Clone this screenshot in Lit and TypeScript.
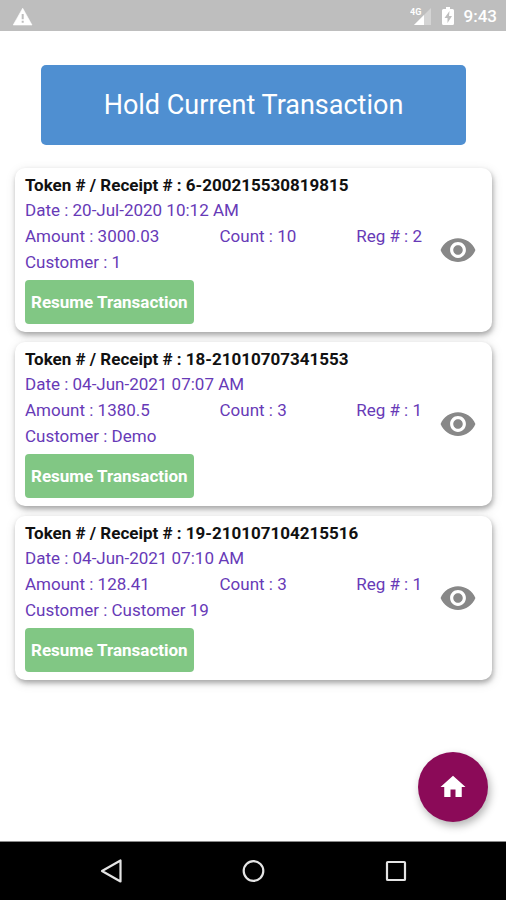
import { LitElement, html, css } from "lit";
import { customElement, property } from "lit/decorators.js";

interface HeldTransaction {
  token: string;
  date: string;
  amount: string;
  count: number;
  register: number;
  customer: string;
}

const HELD: HeldTransaction[] = [
  { token: "6-200215530819815", date: "20-Jul-2020 10:12 AM", amount: "3000.03", count: 10, register: 2, customer: "1" },
  { token: "18-21010707341553", date: "04-Jun-2021 07:07 AM", amount: "1380.5", count: 3, register: 1, customer: "Demo" },
  { token: "19-210107104215516", date: "04-Jun-2021 07:10 AM", amount: "128.41", count: 3, register: 1, customer: "Customer 19" },
];

const controls = css`
  button {
    margin: 0;
    padding: 0;
    border: 0;
    background: none;
    font-family: inherit;
    cursor: pointer;
  }
  svg {
    display: block;
  }
`;

@customElement("status-bar")
class StatusBar extends LitElement {
  static styles = css`
    :host {
      display: flex;
      align-items: center;
      justify-content: space-between;
      height: 31px;
      padding: 0 9px 0 12px;
      background: #bebebe;
      color: #fff;
    }
    svg {
      display: block;
    }
    .right {
      display: flex;
      align-items: center;
      gap: 10px;
    }
    .time {
      font-size: 17px;
      font-weight: 500;
      line-height: 20px;
    }
    .net {
      font-size: 9px;
      font-weight: 700;
    }
  `;

  render() {
    return html`
      <svg width="22" height="22" viewBox="0 0 22 22" aria-label="Warning">
        <path d="M10.7 3.2 20 20H1.2z" fill="#fff" stroke="#fff" stroke-width=".6" stroke-linejoin="round" />
        <path d="M9.7 9h2v5.200h-2zM9.700 15.800h2v2h-2z" fill="#bebebe" />
      </svg>
      <div class="right">
        <svg width="22" height="20" viewBox="0 0 22 20" aria-label="Signal">
          <path d="M21 2v17H4z" fill="#fff" opacity=".35" />
          <path d="M14 9v10H4z" fill="#fff" />
          <text class="net" x="0" y="9" fill="#fff">4G</text>
        </svg>
        <svg width="12" height="20" viewBox="0 0 12 20" aria-label="Battery charging">
          <path d="M4 1h4v2h2.500q1.500 0 1.500 1.500v13q0 1.500-1.500 1.500h-9q-1.500 0-1.500-1.500v-13q0-1.500 1.500-1.500H4z" fill="#fff" />
          <path d="M7.500 5 2.500 12h3v5l4.500-7H7z" fill="#bebebe" />
        </svg>
        <span class="time">9:43</span>
      </div>
    `;
  }
}

@customElement("transaction-card")
class TransactionCard extends LitElement {
  @property({ attribute: false }) item!: HeldTransaction;

  static styles = [
    controls,
    css`
      :host {
        display: flex;
        border-radius: 10px;
        background: #fff;
        box-shadow: 1px 3px 5px rgba(0, 0, 0, 0.28), 1px 3px 12px rgba(0, 0, 0, 0.12);
      }
      .info {
        flex: 1;
        min-width: 0;
        padding: 5px 0 8px 10px;
        color: #673ab7;
        font-size: 17px;
        line-height: 26px;
        white-space: nowrap;
      }
      .title {
        margin: 0;
        color: #111;
        font-size: 17px;
        font-weight: 700;
        line-height: 24px;
      }
      .figures {
        display: grid;
        grid-template-columns: 195fr 137fr 67fr;
      }
      .figures > span {
        min-width: 0;
      }
      .resume {
        display: block;
        height: 44px;
        margin-top: 5px;
        padding: 0 6px;
        border-radius: 4px;
        background: #81c784;
        color: #fff;
        font-size: 17px;
        font-weight: 700;
      }
      .view {
        display: grid;
        place-items: center;
        width: 69px;
      }
    `,
  ];

  render() {
    const t = this.item;
    return html`
      <div class="info">
        <h2 class="title">Token # / Receipt # : ${t.token}</h2>
        <div>Date : ${t.date}</div>
        <div class="figures">
          <span>Amount : ${t.amount}</span>
          <span>Count : ${t.count}</span>
          <span>Reg # : ${t.register}</span>
        </div>
        <div>Customer : ${t.customer}</div>
        <button class="resume" type="button">Resume Transaction</button>
      </div>
      <button class="view" type="button" aria-label="View transaction">
        <svg width="38" height="38" viewBox="0 0 24 24" fill="#888">
          <path
            d="M12 4.500C7 4.500 2.730 7.610 1 12c1.730 4.390 6 7.500 11 7.500s9.270-3.110 11-7.500c-1.730-4.390-6-7.500-11-7.500zM12 17c-2.760 0-5-2.240-5-5s2.240-5 5-5 5 2.240 5 5-2.240 5-5 5zm0-8c-1.660 0-3 1.340-3 3s1.340 3 3 3 3-1.340 3-3-1.340-3-3-3z"
          />
        </svg>
      </button>
    `;
  }
}

@customElement("nav-bar")
class NavBar extends LitElement {
  static styles = [
    controls,
    css`
      :host {
        display: flex;
        justify-content: center;
        gap: 94px;
        height: 58px;
        border-top: 1px solid #8a8a8a;
        background: #000;
      }
      button {
        display: grid;
        place-items: center;
        width: 48px;
      }
      svg {
        fill: none;
        stroke: #e4e4e4;
        stroke-width: 2.200;
      }
    `,
  ];

  render() {
    return html`
      <button type="button" aria-label="Back">
        <svg width="26" height="26" viewBox="0 0 26 26"><path d="M22.500 2.500v21L4 13z" stroke-linejoin="round" /></svg>
      </button>
      <button type="button" aria-label="Home">
        <svg width="26" height="26" viewBox="0 0 26 26"><circle cx="13.500" cy="13" r="9.800" /></svg>
      </button>
      <button type="button" aria-label="Recent apps">
        <svg width="26" height="26" viewBox="0 0 26 26"><rect x="5" y="4" width="18" height="18" rx=".8" /></svg>
      </button>
    `;
  }
}

@customElement("app-root")
class AppRoot extends LitElement {
  static styles = [
    controls,
    css`
      :host {
        display: flex;
        flex-direction: column;
        min-height: 100vh;
        background: #fff;
        font-family: Roboto, "Liberation Sans", sans-serif;
      }
      main {
        position: relative;
        flex: 1;
        padding: 34px 14px 0 15px;
      }
      .hold {
        display: block;
        width: calc(100% - 52px);
        height: 80px;
        margin: 0 26px 23px;
        border-radius: 5px;
        background: #4f8fd1;
        color: #fff;
        font-size: 27px;
      }
      .list {
        display: flex;
        flex-direction: column;
        gap: 10px;
      }
      .home {
        position: absolute;
        right: 18px;
        bottom: 19px;
        display: grid;
        place-items: center;
        width: 70px;
        height: 70px;
        border-radius: 50%;
        background: #8b0a58;
        box-shadow: 2px 4px 8px rgba(0, 0, 0, 0.3);
      }
    `,
  ];

  render() {
    return html`
      <status-bar></status-bar>
      <main>
        <button class="hold" type="button">Hold Current Transaction</button>
        <div class="list">${HELD.map((t) => html`<transaction-card .item=${t}></transaction-card>`)}</div>
        <button class="home" type="button" aria-label="Home">
          <svg width="30" height="30" viewBox="0 0 24 24" fill="#fff">
            <path d="M10 20v-6h4v6h5v-8h3L12 3 2 12h3v8z" />
          </svg>
        </button>
      </main>
      <nav-bar></nav-bar>
    `;
  }
}
